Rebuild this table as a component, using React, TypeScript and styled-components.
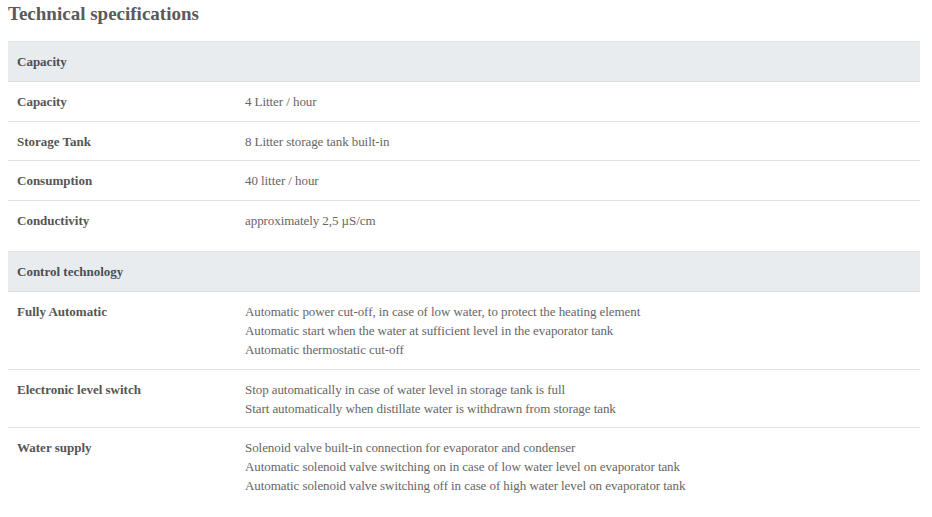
import React from "react";
import styled, { createGlobalStyle } from "styled-components";

const serif = `"Liberation Serif", "Times New Roman", Times, serif`;

const Global = createGlobalStyle`
  html, body { margin: 0; padding: 0; background: #fff; }
  body { font-family: ${serif}; color: #666; }
`;

const Page = styled.div`
  padding: 1px 12px 0 8px;
  font-family: ${serif};
`;

const Title = styled.h2`
  margin: 0 0 14px 0;
  font-family: ${serif};
  font-size: 19px;
  line-height: 26px;
  font-weight: bold;
  color: #5a5a5a;
`;

const Table = styled.table`
  width: 100%;
  border-collapse: collapse;
  margin-bottom: 12px;
  font-family: ${serif};
  font-size: 13px;
  line-height: 19px;
`;

const HeadCell = styled.th`
  background: #e9ecef;
  border-top: 1px solid #e4e7ea;
  border-bottom: 1px solid #dcdfe2;
  text-align: left;
  padding: 10px 9px;
  font-family: ${serif};
  font-weight: bold;
  color: #4a4f55;
`;

const Row = styled.tr<{ $last?: boolean }>`
  border-bottom: ${(p) => (p.$last ? "none" : "1px solid #e2e2e2")};
`;

const Label = styled.td`
  width: 25%;
  padding: 10px 9px 9.5px;
  vertical-align: top;
  font-family: ${serif};
  font-weight: bold;
  color: #555;
`;

const Value = styled.td`
  padding: 10px 9px 9.5px;
  vertical-align: top;
  font-family: ${serif};
  letter-spacing: -0.07px;
  color: #666;
`;

const Line = styled.div``;

type Section = { title: string; rows: [string, string[]][] };

const sections: Section[] = [
  {
    title: "Capacity",
    rows: [
      ["Capacity", ["4 Litter / hour"]],
      ["Storage Tank", ["8 Litter storage tank built-in"]],
      ["Consumption", ["40 litter / hour"]],
      ["Conductivity", ["approximately 2,5 µS/cm"]],
    ],
  },
  {
    title: "Control technology",
    rows: [
      [
        "Fully Automatic",
        [
          "Automatic power cut-off, in case of low water, to protect the heating element",
          "Automatic start when the water at sufficient level in the evaporator tank",
          "Automatic thermostatic cut-off",
        ],
      ],
      [
        "Electronic level switch",
        [
          "Stop automatically in case of water level in storage tank is full",
          "Start automatically when distillate water is withdrawn from storage tank",
        ],
      ],
      [
        "Water supply",
        [
          "Solenoid valve built-in connection for evaporator and condenser",
          "Automatic solenoid valve switching on in case of low water level on evaporator tank",
          "Automatic solenoid valve switching off in case of high water level on evaporator tank",
        ],
      ],
    ],
  },
];

export default function App() {
  return (
    <Page>
      <Global />
      <Title>Technical specifications</Title>
      {sections.map((s) => (
        <Table key={s.title}>
          <thead>
            <tr>
              <HeadCell colSpan={2}>{s.title}</HeadCell>
            </tr>
          </thead>
          <tbody>
            {s.rows.map(([label, lines], i) => (
              <Row key={label} $last={i === s.rows.length - 1}>
                <Label>{label}</Label>
                <Value>
                  {lines.map((l) => (
                    <Line key={l}>{l}</Line>
                  ))}
                </Value>
              </Row>
            ))}
          </tbody>
        </Table>
      ))}
    </Page>
  );
}
